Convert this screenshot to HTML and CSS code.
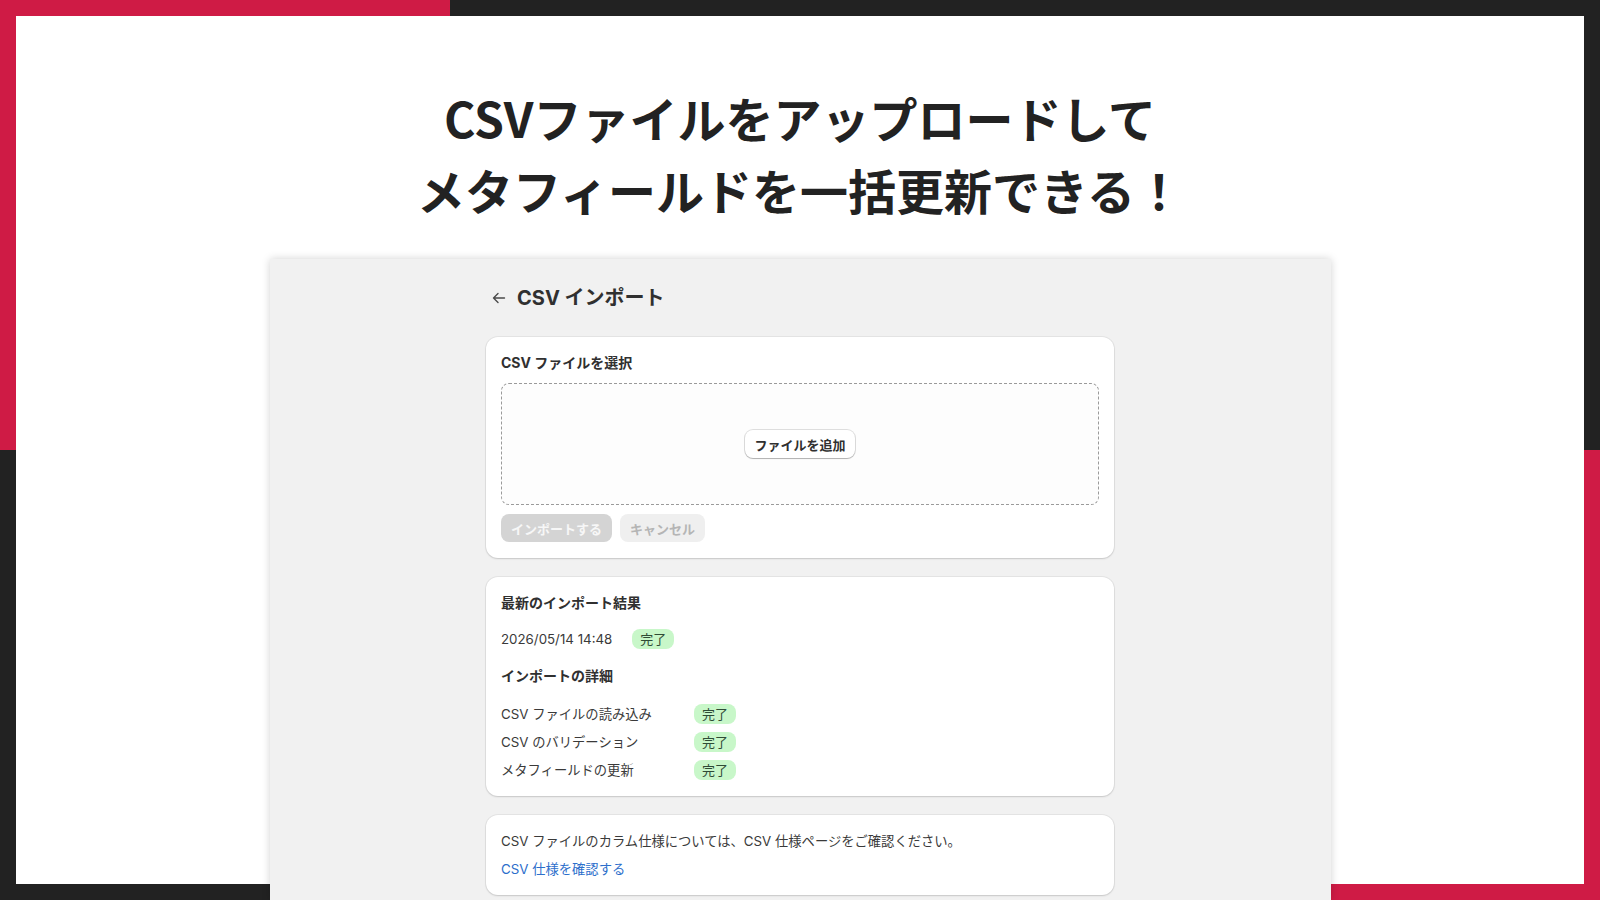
FILE: index.html
```html
<!DOCTYPE html>
<html lang="ja">
<head>
    <meta charset="UTF-8">
    <meta name="viewport" content="width=device-width, initial-scale=1.0">
    <title>CSV インポート</title>
    <link rel="stylesheet" href="styles.css">
</head>
<body>
    <div class="frame">
        <div class="canvas">
            <h1 class="headline">CSVファイルをアップロードして<br>メタフィールドを一括更新できる！</h1>

            <div class="screen">
                <div class="page">
                    <div class="page-title">
                        <svg class="back-arrow" width="16" height="16" viewBox="0 0 16 16" fill="none">
                            <path d="M13.5 8H2.5M7 3.5L2.5 8L7 12.5" stroke="#4a4a4a" stroke-width="1.4" stroke-linecap="round" stroke-linejoin="round"/>
                        </svg>
                        <h2>CSV インポート</h2>
                    </div>

                    <div class="card">
                        <h3>CSV ファイルを選択</h3>
                        <div class="dropzone">
                            <button class="btn-secondary">ファイルを追加</button>
                        </div>
                        <div class="actions">
                            <button class="btn-primary" disabled>インポートする</button>
                            <button class="btn-cancel" disabled>キャンセル</button>
                        </div>
                    </div>

                    <div class="card">
                        <h3>最新のインポート結果</h3>
                        <div class="result-row">
                            <span>2026/05/14 14:48</span>
                            <span class="badge">完了</span>
                        </div>
                        <h3 class="sub-heading">インポートの詳細</h3>
                        <div class="steps">
                            <div class="step"><span class="step-label">CSV ファイルの読み込み</span><span class="badge">完了</span></div>
                            <div class="step"><span class="step-label">CSV のバリデーション</span><span class="badge">完了</span></div>
                            <div class="step"><span class="step-label">メタフィールドの更新</span><span class="badge">完了</span></div>
                        </div>
                    </div>

                    <div class="card">
                        <p class="note">CSV ファイルのカラム仕様については、CSV 仕様ページをご確認ください。</p>
                        <a class="link" href="#">CSV 仕様を確認する</a>
                    </div>
                </div>
            </div>
        </div>
    </div>
</body>
</html>
```

FILE: styles.css
```css
body {
    margin: 0;
    padding: 0;
    font-family: Inter, "Noto Sans CJK JP", sans-serif;
    color: #303030;
    overflow: hidden;
}

.frame {
    height: 100vh;
    box-sizing: border-box;
    padding: 16px;
    background:
        linear-gradient(#cf1b45, #cf1b45) left top / 450px 450px no-repeat,
        linear-gradient(#cf1b45, #cf1b45) right bottom / 450px 450px no-repeat,
        #222222;
}

.canvas {
    height: 100%;
    background-color: #ffffff;
    display: flex;
    flex-direction: column;
    align-items: center;
}

.headline {
    margin: 65px 0 34px;
    font-family: "Noto Sans CJK JP", sans-serif;
    font-size: 48px;
    font-weight: 700;
    line-height: 72px;
    color: #222222;
    text-align: center;
}

.screen {
    flex: 1;
    width: 1061px;
    margin-bottom: -16px;
    background-color: #f1f1f1;
    border-radius: 2px 2px 0 0;
    box-shadow: 0 0 9px rgba(0, 0, 0, 0.18);
    display: flex;
    justify-content: center;
}

.page {
    width: 628px;
    padding-top: 25px;
    display: flex;
    flex-direction: column;
    gap: 19px;
}

.page-title {
    display: flex;
    align-items: center;
    gap: 10px;
    height: 28px;
    padding-left: 5px;
    margin-bottom: 6px;
}

.page-title h2 {
    margin: 0;
    font-size: 20px;
    font-weight: 700;
    line-height: 28px;
    color: #303030;
}

.card {
    background-color: #ffffff;
    border-radius: 12px;
    padding: 16px 15px;
    box-shadow: 0 1px 2px rgba(0, 0, 0, 0.13), 0 0 0 1px rgba(0, 0, 0, 0.05);
}

.card h3 {
    margin: 0;
    font-size: 14px;
    font-weight: 700;
    line-height: 20px;
    color: #303030;
}

.dropzone {
    margin-top: 10px;
    height: 120px;
    border: 1px dashed #9a9a9a;
    border-radius: 8px;
    background-color: #fdfdfd;
    display: flex;
    align-items: center;
    justify-content: center;
}

button {
    font-family: Inter, "Noto Sans CJK JP", sans-serif;
    font-size: 13px;
    font-weight: 700;
    height: 28px;
    border-radius: 8px;
    border: none;
    padding: 0 10px;
    white-space: nowrap;
}

.btn-secondary {
    background-color: #ffffff;
    color: #303030;
    padding: 0 9px;
    box-shadow: 0 0 0 1px rgba(0, 0, 0, 0.12), 0 1px 1px rgba(0, 0, 0, 0.2);
}

.actions {
    margin-top: 9px;
    display: flex;
    gap: 8px;
}

.btn-primary {
    background-color: #d4d4d4;
    color: #f7f7f7;
}

.btn-cancel {
    background-color: #efefef;
    color: #b5b5b5;
}

.result-row {
    margin-top: 16px;
    display: flex;
    align-items: center;
    gap: 20px;
    font-size: 13.3px;
    line-height: 20px;
    color: #3a3a3a;
}

.sub-heading {
    margin-top: 17px !important;
}

.steps {
    margin-top: 18px;
    display: flex;
    flex-direction: column;
    gap: 8px;
}

.step {
    display: flex;
    align-items: center;
    font-size: 13.3px;
    line-height: 20px;
    color: #3a3a3a;
}

.step-label {
    width: 193px;
}

.badge {
    display: inline-block;
    background-color: #c8f7c9;
    color: #2f4b36;
    font-size: 13px;
    line-height: 20px;
    padding: 0 8px;
    border-radius: 8px;
}

.note {
    margin: 0;
    font-size: 13.3px;
    line-height: 20px;
    color: #3a3a3a;
}

.link {
    display: block;
    margin-top: 8px;
    font-size: 13.3px;
    line-height: 20px;
    color: #2c6ecb;
    text-decoration: none;
}
```
